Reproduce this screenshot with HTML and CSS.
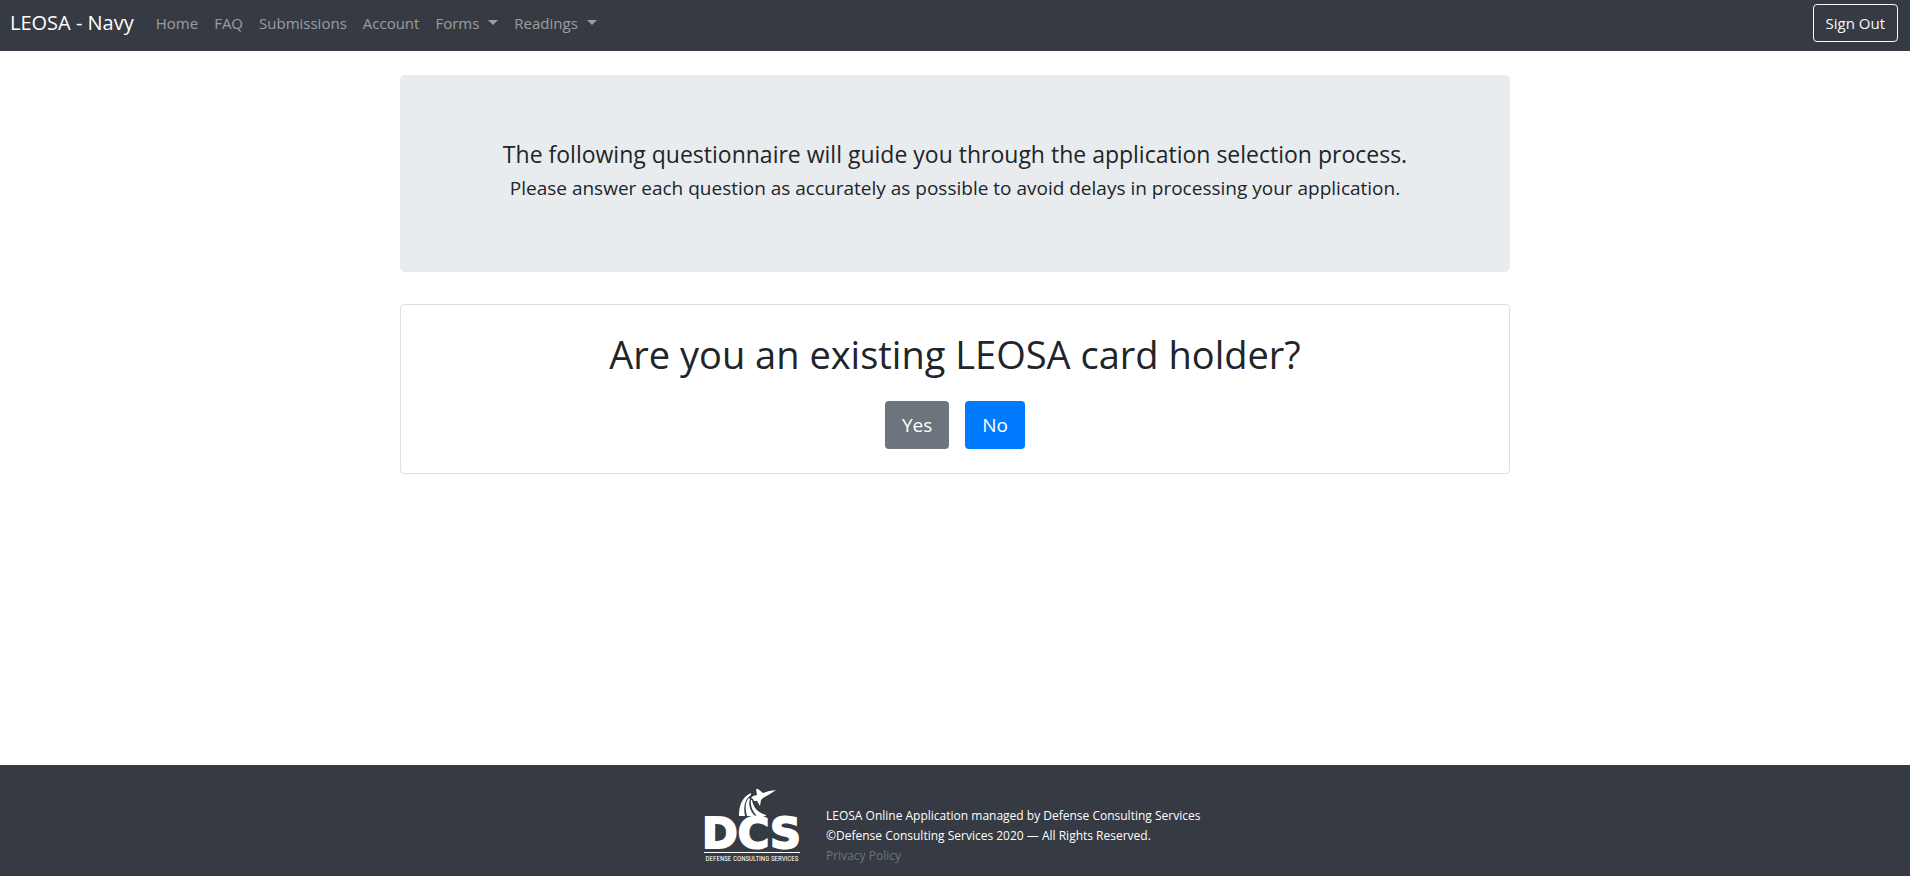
FILE: index.html
```html
<!DOCTYPE html>
<html lang="en">

<head>
    <meta charset="UTF-8">
    <meta name="viewport" content="width=device-width, initial-scale=1.0">
    <title>LEOSA - Navy</title>
    <link rel="stylesheet" href="styles.css">
</head>

<body>
    <nav class="navbar">
        <a class="navbar-brand" href="#">LEOSA - Navy</a>
        <ul class="navbar-nav">
            <li><a class="nav-link" href="#">Home</a></li>
            <li><a class="nav-link" href="#">FAQ</a></li>
            <li><a class="nav-link" href="#">Submissions</a></li>
            <li><a class="nav-link" href="#">Account</a></li>
            <li><a class="nav-link dropdown-toggle" href="#">Forms</a></li>
            <li><a class="nav-link dropdown-toggle" href="#">Readings</a></li>
        </ul>
        <button type="button" class="btn btn-outline-light">Sign Out</button>
    </nav>

    <main class="container">
        <div class="jumbotron">
            <h4>The following questionnaire will guide you through the application selection process.</h4>
            <p class="lead">Please answer each question as accurately as possible to avoid delays in processing your application.</p>
        </div>

        <div class="card">
            <h1>Are you an existing LEOSA card holder?</h1>
            <div class="answers">
                <button type="button" class="btn btn-lg btn-secondary">Yes</button>
                <button type="button" class="btn btn-lg btn-primary">No</button>
            </div>
        </div>
    </main>

    <footer class="footer">
        <svg class="logo" viewBox="0 0 100 76" role="img" aria-label="Defense Consulting Services">
            <g fill="#fff">
                <!-- jet -->
                <path d="M74 3 L68 7 L61 11 L59 13 L58 19 L55 14 L52 14 L51 12 L49 11 L51 9 L55 8 L54 2 L56 2 L61 6 L67 4 Z" />
                <!-- trails -->
                <path d="M37 29 C37 18 40 10 49 6 L49 8 C43 12 41 19 43 29 Z" />
                <path d="M45 29 C43 21 43 15 47 11 L48 12 C46 17 48 24 53 29 Z" />
                <path d="M55 29 C50 24 48 18 49 13 L50 13 C51 20 56 26 64 28 L64 29 Z" />
                <rect x="2" y="65" width="96" height="1" />
            </g>
            <text class="logo-name" x="0" y="61">DCS</text>
            <text class="logo-sub" x="50" y="74">DEFENSE CONSULTING SERVICES</text>
        </svg>
        <div class="footer-text">
            <span>LEOSA Online Application managed by Defense Consulting Services</span>
            <span>©Defense Consulting Services 2020 — All Rights Reserved.</span>
            <a href="#">Privacy Policy</a>
        </div>
    </footer>
</body>

</html>
```

FILE: styles.css
```css
* {
    box-sizing: border-box;
}

body {
    display: flex;
    flex-direction: column;
    min-height: 100vh;
    margin: 0;
    font-family: "Segoe UI", "Open Sans", "Noto Sans", sans-serif;
    font-size: 15px;
    line-height: 24px;
    color: #212529;
    background: #fff;
}

h1, h4, p, ul {
    margin: 0;
    padding: 0;
    font-weight: 400;
}

a {
    text-decoration: none;
}

.navbar {
    display: flex;
    align-items: center;
    padding: 3px 12px 8px 10px;
    background: #363a42;
}

.navbar-brand {
    margin-right: 14px;
    font-size: 20px;
    color: #fff;
}

.navbar-nav {
    display: flex;
    flex: 1;
    list-style: none;
}

.nav-link {
    display: block;
    padding: 8px;
    color: rgba(255, 255, 255, .5);
}

.dropdown-toggle::after {
    content: "";
    display: inline-block;
    margin-left: 9px;
    vertical-align: 4px;
    border-top: 5px solid;
    border-right: 5px solid transparent;
    border-left: 5px solid transparent;
}

.btn {
    padding: 6px 12px;
    border: 1px solid transparent;
    border-radius: 4px;
    font: inherit;
    color: #fff;
    cursor: pointer;
}

.btn-outline-light {
    border-color: #f8f9fa;
    background: transparent;
    color: #f8f9fa;
}

.btn-lg {
    padding: 8px 16px;
    font-size: 19px;
    line-height: 30px;
}

.btn-secondary {
    background: #6c757d;
}

.btn-primary {
    background: #007bff;
}

.container {
    flex: 1;
    width: 100%;
    max-width: 1140px;
    margin: 0 auto;
    padding: 24px 15px;
}

.jumbotron {
    margin-bottom: 32px;
    padding: 64px 32px;
    border-radius: 5px;
    background: #e8ecef;
    text-align: center;
}

.jumbotron h4 {
    font-size: 23px;
    line-height: 30px;
}

.lead {
    font-size: 19px;
    line-height: 39px;
}

.card {
    padding: 24px;
    border: 1px solid #dfdfdf;
    border-radius: 4px;
    text-align: center;
}

.card h1 {
    margin-bottom: 22px;
    font-size: 38px;
    line-height: 50px;
}

.answers {
    display: flex;
    justify-content: center;
    gap: 16px;
}

.footer {
    display: flex;
    justify-content: center;
    gap: 24px;
    padding: 22px 0 10px;
    background: #363a42;
}

.logo {
    width: 100px;
    height: 76px;
}

.logo-name {
    font: bold 43px "DejaVu Sans", sans-serif;
    fill: #fff;
    stroke: #fff;
    stroke-width: 2px;
}

.logo-sub {
    font: 7px "Roboto Condensed", Roboto, sans-serif;
    fill: #fff;
    text-anchor: middle;
}

.footer-text {
    display: flex;
    flex-direction: column;
    flex-basis: 382px;
    padding-top: 19px;
    font-size: 12px;
    line-height: 20px;
    color: #fff;
}

.footer-text a {
    color: #6c757d;
}
```
